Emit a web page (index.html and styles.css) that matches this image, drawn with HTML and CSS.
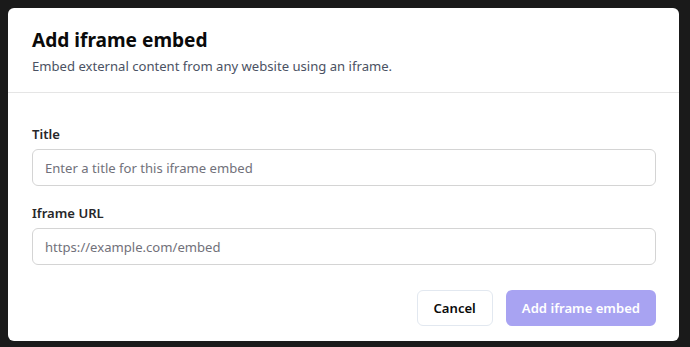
FILE: index.html
```html
<!DOCTYPE html>
<html lang="en">
<head>
    <meta charset="UTF-8">
    <meta name="viewport" content="width=device-width, initial-scale=1.0">
    <title>Add iframe embed</title>
    <link rel="stylesheet" href="styles.css">
</head>
<body>
    <div class="modal">
        <div class="modal-header">
            <h2>Add iframe embed</h2>
            <p>Embed external content from any website using an iframe.</p>
        </div>
        <form class="modal-body" onsubmit="return false">
            <div class="input-group">
                <label for="embedTitle">Title</label>
                <input type="text" id="embedTitle" placeholder="Enter a title for this iframe embed">
            </div>
            <div class="input-group">
                <label for="embedUrl">Iframe URL</label>
                <input type="text" id="embedUrl" placeholder="https://example.com/embed">
            </div>
            <div class="actions">
                <button type="button" class="btn btn-cancel">Cancel</button>
                <button type="submit" class="btn btn-primary" disabled>Add iframe embed</button>
            </div>
        </form>
    </div>
</body>
</html>
```

FILE: styles.css
```css
body {
    font-family: "Noto Sans", "Open Sans", sans-serif;
    margin: 0;
    padding: 8px 11px 6px 8px;
    background-color: #1a1a1a;
    height: 100vh;
    box-sizing: border-box;
}
.modal {
    height: 100%;
    background-color: #fff;
    border-radius: 6px;
    overflow: hidden;
}
.modal-header {
    padding: 18px 24px 16px;
    border-bottom: 1px solid #e5e5e5;
}
h2 {
    margin: 0;
    font-size: 19.1px;
    line-height: 28px;
    font-weight: 700;
    color: #0a0a0a;
}
.modal-header p {
    margin: 2px 0 0;
    font-size: 13.1px;
    line-height: 20px;
    color: #4b5263;
}
.modal-body {
    padding: 31px 23px 16px 24px;
}
.input-group {
    margin-bottom: 17px;
}
label {
    display: block;
    font-size: 13.1px;
    line-height: 20px;
    font-weight: 600;
    color: #27272a;
    margin-bottom: 5px;
}
input {
    width: 100%;
    height: 37px;
    padding: 0 12px;
    border: 1px solid #d4d4d4;
    border-radius: 6px;
    box-sizing: border-box;
    font-family: inherit;
    font-size: 13.1px;
    color: #0a0a0a;
}
input::placeholder {
    color: #71717a;
}
.actions {
    display: flex;
    justify-content: flex-end;
    gap: 13px;
    margin-top: 25px;
}
.btn {
    height: 36px;
    padding: 0 16px;
    border-radius: 6px;
    font-family: inherit;
    font-size: 13.1px;
    font-weight: 600;
}
.btn-cancel {
    background-color: #fff;
    border: 1px solid #e2e8f0;
    color: #0a0a0a;
}
.btn-primary {
    background-color: #a8a3f2;
    border: none;
    color: #fff;
}
```
